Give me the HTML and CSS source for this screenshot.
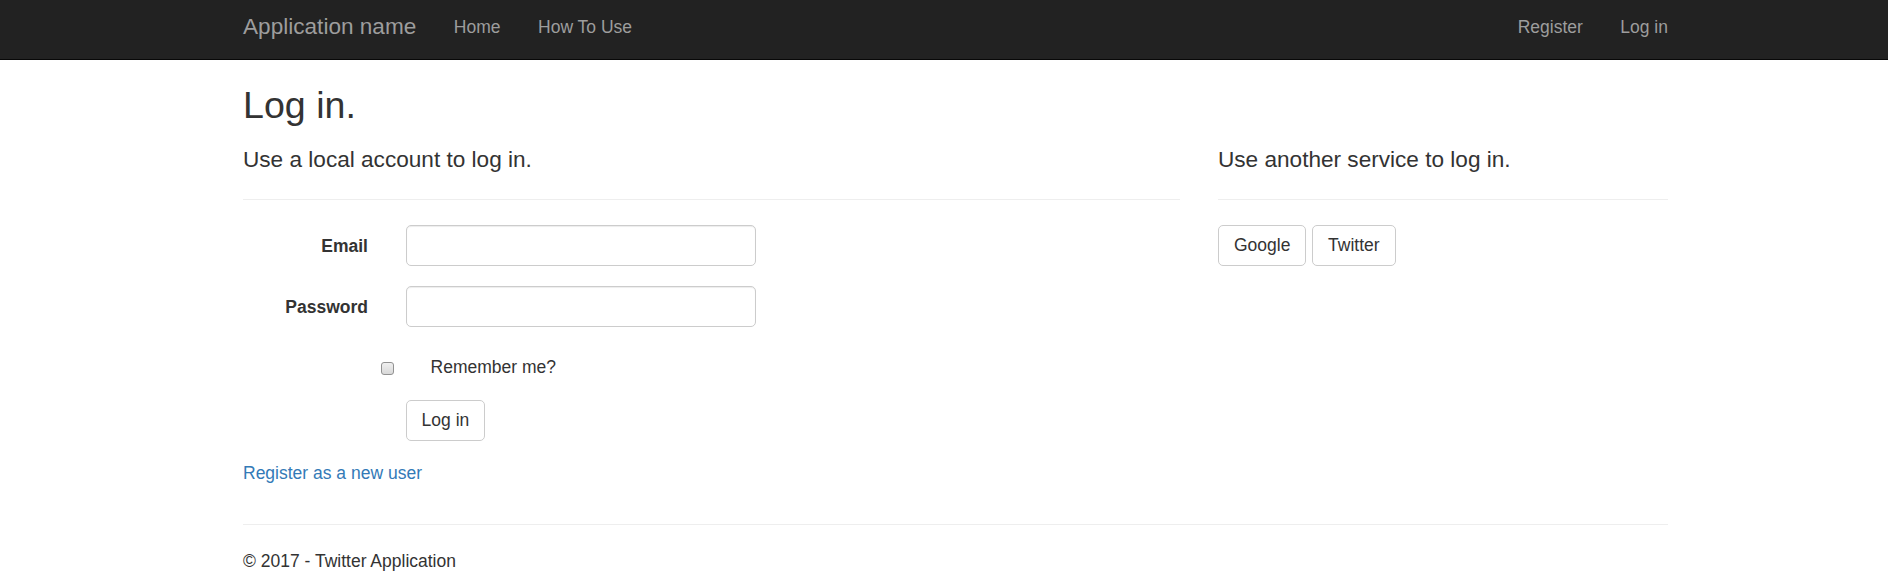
FILE: index.html
```html
<!DOCTYPE html>
<html lang="en">
<head>
<meta charset="utf-8">
<title>Log in - Application name</title>
<link rel="stylesheet" href="styles.css">
</head>
<body>
<header class="navbar">
  <div class="nav-inner">
    <a class="brand" href="#">Application name</a>
    <ul class="nav-links">
      <li><a href="#">Home</a></li>
      <li><a href="#">How To Use</a></li>
    </ul>
    <ul class="nav-links nav-right">
      <li><a href="#">Register</a></li>
      <li><a href="#">Log in</a></li>
    </ul>
  </div>
</header>

<main class="container">
  <h2 class="page-title">Log in.</h2>
  <div class="columns">
    <section class="col">
      <h4 class="section-title">Use a local account to log in.</h4>
      <hr class="rule">
      <form class="login-form">
        <div class="form-row">
          <label class="form-label" for="email">Email</label>
          <input class="form-input" id="email" type="email">
        </div>
        <div class="form-row">
          <label class="form-label" for="password">Password</label>
          <input class="form-input" id="password" type="password">
        </div>
        <div class="form-row check-row">
          <label class="check-label"><input class="check" type="checkbox"><span>Remember me?</span></label>
        </div>
        <div class="form-row btn-row">
          <button class="btn" type="button">Log in</button>
        </div>
        <p class="register"><a href="#">Register as a new user</a></p>
      </form>
    </section>
    <section class="col">
      <h4 class="section-title">Use another service to log in.</h4>
      <hr class="rule">
      <div class="providers">
        <button class="btn" type="button">Google</button>
        <button class="btn" type="button">Twitter</button>
      </div>
    </section>
  </div>
  <hr class="rule footer-rule">
  <footer class="footer">
    <p>&copy; 2017 - Twitter Application</p>
  </footer>
</main>
</body>
</html>
```

FILE: styles.css
```css
* {
  box-sizing: border-box;
}

html, body {
  margin: 0;
  padding: 0;
  background: #fff;
}

body {
  font-family: "Liberation Sans", Arial, Helvetica, sans-serif;
  font-size: 17.5px;
  line-height: 25px;
  color: #333;
}

a {
  text-decoration: none;
}

/* Navbar */
.navbar {
  background: #222;
  border-bottom: 1px solid #080808;
  height: 60px;
}

.nav-inner {
  width: 1425px;
  margin-left: 243px;
  display: flex;
  align-items: flex-start;
  height: 59px;
}

.brand {
  font-size: 22.6px;
  line-height: 25px;
  padding-top: 13.5px;
  color: #9d9d9d;
  margin-right: 37.5px;
}

.nav-links {
  list-style: none;
  margin: 0;
  padding: 0;
  display: flex;
  gap: 37.5px;
}

.nav-links a {
  display: block;
  padding-top: 15px;
  line-height: 25px;
  color: #9d9d9d;
}

.nav-right {
  margin-left: auto;
}

/* Content */
.container {
  width: 1425px;
  margin-left: 243px;
}

.page-title {
  font-size: 37.6px;
  font-weight: 500;
  line-height: 40px;
  margin: 25.3px 0 0;
}

.columns {
  display: grid;
  grid-template-columns: 937px 450px;
  column-gap: 38px;
  align-items: start;
}

.section-title {
  font-size: 22.6px;
  font-weight: 500;
  line-height: 24.6px;
  margin: 22.9px 0 0;
}

.rule {
  border: 0;
  border-top: 1px solid #eee;
  height: 0;
  margin: 0;
}

.col .rule {
  margin-top: 26.2px;
}

.login-form,
.providers {
  margin-top: 25.3px;
}

.form-row {
  display: grid;
  grid-template-columns: 125px 350px;
  column-gap: 37.6px;
  margin-bottom: 20px;
}

.form-label {
  text-align: right;
  font-weight: bold;
  padding-top: 8.5px;
  line-height: 25px;
}

.form-input {
  width: 350px;
  height: 41px;
  border: 1px solid #ccc;
  border-radius: 5px;
  box-shadow: inset 0 1px 1px rgba(0, 0, 0, 0.075);
  background: #fff;
  font: inherit;
  padding: 7px 15px;
  margin: 0;
}

.check-row {
  padding-top: 8px;
}

.check-label,
.btn-row .btn {
  grid-column: 2;
}

.check-label {
  display: flex;
  align-items: flex-start;
  margin-left: -25px;
  line-height: 25px;
}

.check {
  appearance: none;
  -webkit-appearance: none;
  width: 13px;
  height: 13px;
  margin: 6.4px 37px 0 0;
  border: 1px solid #929292;
  border-radius: 3px;
  background: linear-gradient(#f0f0f0, #d8d8d8);
  flex: none;
}

.btn {
  font: inherit;
  font-size: 17.5px;
  line-height: 25px;
  color: #333;
  background: #fff;
  border: 1px solid #ccc;
  border-radius: 5px;
  padding: 7px 15px;
  margin: 0;
  height: 41px;
  justify-self: start;
}

.btn-row {
  margin-bottom: 19.5px;
}

.register {
  margin: 0;
}

.register a {
  color: #337ab7;
}

.providers {
  display: flex;
  gap: 5.6px;
}

.footer-rule {
  margin-top: 38.5px;
}

.footer p {
  margin: 24.2px 0 0;
}
```
